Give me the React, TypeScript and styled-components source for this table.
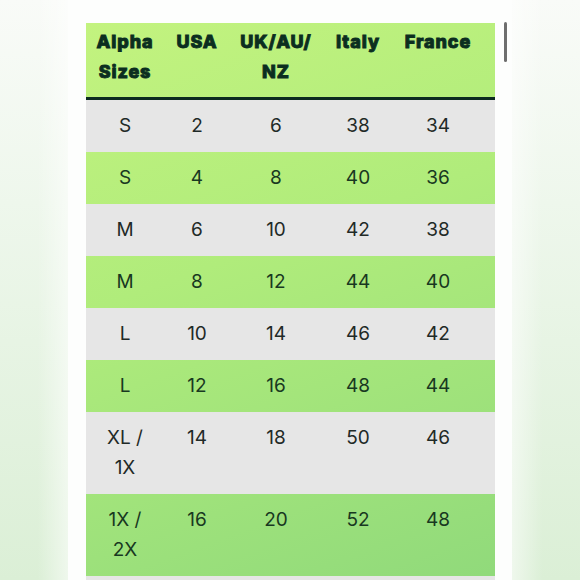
import React from 'react';
import styled, { createGlobalStyle } from 'styled-components';

const GlobalStyle = createGlobalStyle`
  html, body {
    margin: 0;
    padding: 0;
    width: 580px;
    height: 580px;
    overflow: hidden;
    background: #ffffff;
  }
`;

const Page = styled.div`
  display: flex;
  width: 580px;
  height: 580px;
  overflow: hidden;
`;

const SidePanel = styled.div<{ $side: 'left' | 'right' }>`
  width: 68px;
  flex-shrink: 0;
  background:
    linear-gradient(
      ${(p) => (p.$side === 'left' ? 'to left' : 'to right')},
      rgba(255, 255, 255, 0.55) 0%,
      rgba(255, 255, 255, 0) 45%
    ),
    linear-gradient(to bottom, #f9fbf8 0%, #eef7ec 35%, #dbefd6 100%);
`;

const Sheet = styled.div`
  position: relative;
  flex: 1;
  padding: 23px 17px 0 18px;
  background: #fdfefd;
  box-sizing: border-box;
`;

const ScrollThumb = styled.div`
  position: absolute;
  right: 5px;
  top: 22px;
  width: 3px;
  height: 40px;
  border-radius: 2px;
  background: #6e6e6e;
`;

const Table = styled.div`
  display: grid;
  grid-template-columns: 78px 66px 92px 72px 88px 1fr;
  background: linear-gradient(160deg, #c3f37f 0%, #b0ec7b 40%, #8fd97b 100%);
`;

const HeadCell = styled.div`
  padding: 4px 0 10px;
  border-bottom: 3px solid #0c2a20;
  font-family: Inter, 'Liberation Sans', sans-serif;
  font-weight: 800;
  font-size: 18px;
  line-height: 30px;
  color: #0b2e1f;
  text-align: center;
  letter-spacing: 0.9px;
  -webkit-text-stroke: 0.9px #0b2e1f;
`;

const Cell = styled.div<{ $gray: boolean }>`
  padding: 11px 0;
  font-family: Inter, 'Liberation Sans', sans-serif;
  font-weight: 400;
  font-size: 19px;
  line-height: 30px;
  color: ${(p) => (p.$gray ? '#1f2a27' : '#183821')};
  text-align: center;
  background: ${(p) => (p.$gray ? '#e6e6e6' : 'transparent')};
`;

const TailRow = styled.div`
  grid-column: 1 / -1;
  height: 20px;
  background: #e6e6e6;
`;

const headers = ['Alpha Sizes', 'USA', 'UK/AU/ NZ', 'Italy', 'France', ''];

const rows: string[][] = [
  ['S', '2', '6', '38', '34'],
  ['S', '4', '8', '40', '36'],
  ['M', '6', '10', '42', '38'],
  ['M', '8', '12', '44', '40'],
  ['L', '10', '14', '46', '42'],
  ['L', '12', '16', '48', '44'],
  ['XL / 1X', '14', '18', '50', '46'],
  ['1X / 2X', '16', '20', '52', '48'],
];

const headLines: Record<string, string[]> = {
  'Alpha Sizes': ['Alpha', 'Sizes'],
  'UK/AU/ NZ': ['UK/AU/', 'NZ'],
};

const sizeLines: Record<string, string[]> = {
  'XL / 1X': ['XL /', '1X'],
  '1X / 2X': ['1X /', '2X'],
};

export default function App() {
  return (
    <>
      <GlobalStyle />
      <Page>
        <SidePanel $side="left" />
        <Sheet>
          <Table>
            {headers.map((h, i) => (
              <HeadCell key={i}>
                {(headLines[h] || [h]).map((line, j) => (
                  <div key={j}>{line}</div>
                ))}
              </HeadCell>
            ))}
            {rows.map((row, r) => (
              <React.Fragment key={r}>
                {row.map((v, c) => (
                  <Cell key={c} $gray={r % 2 === 0}>
                    {(c === 0 && sizeLines[v] ? sizeLines[v] : [v]).map((line, j) => (
                      <div key={j}>{line}</div>
                    ))}
                  </Cell>
                ))}
                <Cell $gray={r % 2 === 0} />
              </React.Fragment>
            ))}
            <TailRow />
          </Table>
          <ScrollThumb />
        </Sheet>
        <SidePanel $side="right" />
      </Page>
    </>
  );
}
